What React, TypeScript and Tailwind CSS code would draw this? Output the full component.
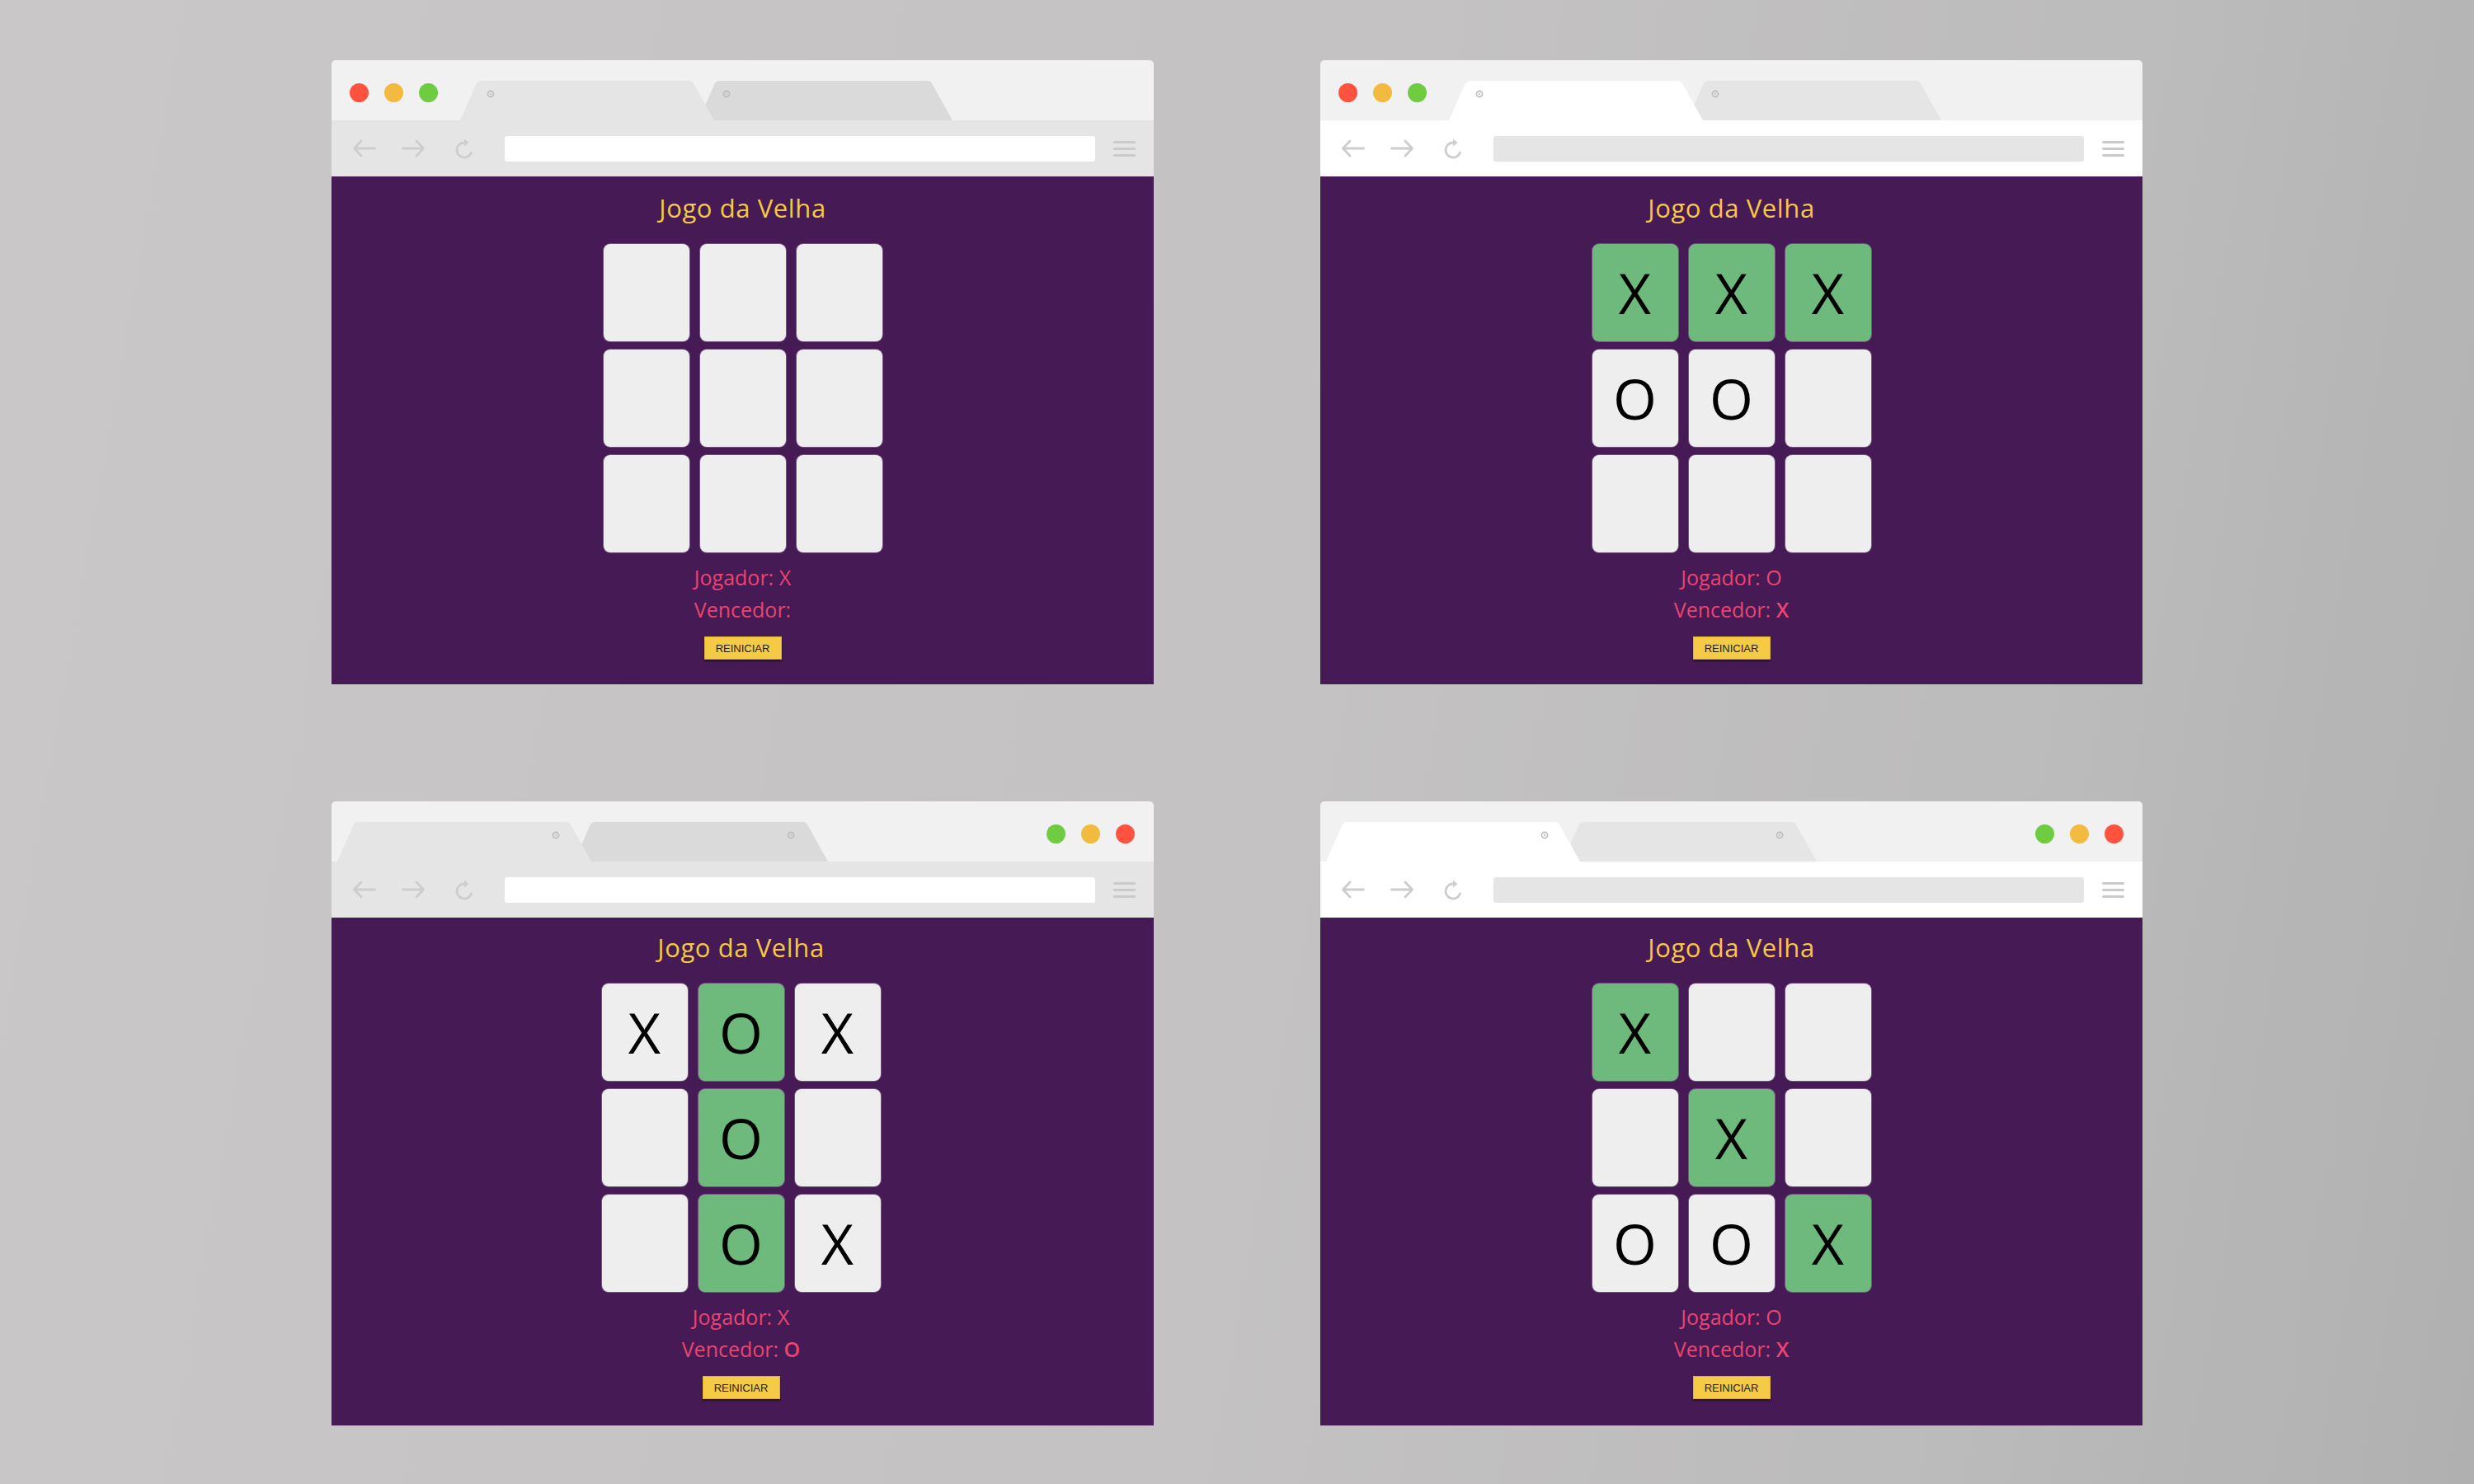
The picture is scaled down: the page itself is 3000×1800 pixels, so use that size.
type Mark = 'X' | 'O' | '';

type Game = {
  board: Mark[];
  win: number[];
  player: string;
  winner: string;
  flipped: boolean;
  active: boolean;
};

const games: Game[] = [
  { board: ['', '', '', '', '', '', '', '', ''], win: [], player: 'X', winner: '', flipped: false, active: false },
  { board: ['X', 'X', 'X', 'O', 'O', '', '', '', ''], win: [0, 1, 2], player: 'O', winner: 'X', flipped: false, active: true },
  { board: ['X', 'O', 'X', '', 'O', '', '', 'O', 'X'], win: [1, 4, 7], player: 'X', winner: 'O', flipped: true, active: false },
  { board: ['X', '', '', '', 'X', '', 'O', 'O', 'X'], win: [0, 4, 8], player: 'O', winner: 'X', flipped: true, active: true },
];

function Tab({ fill, closeX, className }: { fill: string; closeX: number; className?: string }) {
  return (
    <svg width="308" height="48" viewBox="0 0 308 48" className={className}>
      <path d="M0 48 L19 5 Q21 0 26 0 L277 0 Q282 0 284 5 L308 48 Z" fill={fill} />
      <circle cx={closeX} cy="16" r="3.6" fill="none" stroke="#bcbcbc" strokeWidth="1.6" />
      <path d={`M${closeX - 1.3} 14.7 L${closeX + 1.3} 17.3 M${closeX + 1.3} 14.7 L${closeX - 1.3} 17.3`} stroke="#c4c4c4" strokeWidth="1" />
    </svg>
  );
}

function Lights({ reverse }: { reverse: boolean }) {
  const colors = reverse ? ['#6fcb3f', '#f2ba3e', '#ff533f'] : ['#ff533f', '#f2ba3e', '#6fcb3f'];
  return (
    <div className={`flex gap-[19px] self-start mt-[28px] ${reverse ? 'ml-auto' : ''}`}>
      {colors.map((c) => (
        <div key={c} className="w-[23px] h-[23px] rounded-full" style={{ backgroundColor: c }} />
      ))}
    </div>
  );
}

function Toolbar({ active }: { active: boolean }) {
  const stroke = '#cdcdcd';
  return (
    <div className={`h-[68px] flex items-center pl-[25px] pr-[22px] ${active ? 'bg-white' : 'bg-[#e5e5e5]'}`}>
      <svg width="29" height="22" viewBox="0 0 29 22" fill="none">
        <path d="M27.5 11 H3 M11 2 L2.5 11 L11 20" stroke={stroke} strokeWidth="2.8" strokeLinecap="round" strokeLinejoin="round" />
      </svg>
      <svg width="29" height="22" viewBox="0 0 29 22" fill="none" className="ml-[31px]">
        <path d="M1.5 11 H26 M18 2 L26.5 11 L18 20" stroke={stroke} strokeWidth="2.8" strokeLinecap="round" strokeLinejoin="round" />
      </svg>
      <svg width="24" height="25" viewBox="0 0 24 25" fill="none" className="ml-[35px]">
        <path d="M12.5 5 A9 9 0 1 0 20.5 17" stroke={stroke} strokeWidth="2.8" strokeLinecap="round" />
        <path d="M12 0.5 L17.5 5 L12 9.5 Z" fill={stroke} />
      </svg>
      <div className={`ml-[37px] h-[31px] w-[716px] rounded-[3px] ${active ? 'bg-[#e5e5e5]' : 'bg-white'}`} />
      <div className="ml-auto flex flex-col gap-[5px]">
        <div className="w-[27px] h-[3px] rounded-full bg-[#cacaca]" />
        <div className="w-[27px] h-[3px] rounded-full bg-[#cacaca]" />
        <div className="w-[27px] h-[3px] rounded-full bg-[#cacaca]" />
      </div>
    </div>
  );
}

function TitleBar({ game }: { game: Game }) {
  const tab1 = game.active ? '#ffffff' : '#e5e5e5';
  const tab2 = game.active ? '#e5e5e5' : '#dadada';
  if (game.flipped) {
    return (
      <div className="h-[73px] bg-[#f1f1f1] rounded-t-[5px] flex items-end pl-[7px] pr-[23px]">
        <Tab fill={tab1} closeX={265} className="relative z-10" />
        <Tab fill={tab2} closeX={263} className="-ml-[21px]" />
        <Lights reverse />
      </div>
    );
  }
  return (
    <div className="h-[73px] bg-[#f1f1f1] rounded-t-[5px] flex items-end pl-[22px]">
      <Lights reverse={false} />
      <Tab fill={tab1} closeX={37} className="ml-[27px] relative z-10" />
      <Tab fill={tab2} closeX={34} className="-ml-[19px]" />
    </div>
  );
}

function Board({ game }: { game: Game }) {
  return (
    <div className="grid grid-cols-[104px_104px_104px] gap-x-[13px] gap-y-[10px]">
      {game.board.map((m, i) => (
        <div
          key={i}
          className={`h-[118px] rounded-[8px] flex items-center justify-center text-[68px] font-normal leading-none text-black shadow-[0_0_0_1px_rgba(255,255,255,0.25)] ${
            game.win.includes(i) ? 'bg-[#6eb97c]' : 'bg-[#eeeeee]'
          }`}
        >
          {m}
        </div>
      ))}
    </div>
  );
}

function Window({ game }: { game: Game }) {
  return (
    <div className="w-[997px] flex flex-col">
      <TitleBar game={game} />
      <Toolbar active={game.active} />
      <div
        className={`h-[616px] bg-[#461a55] flex flex-col items-center font-['Open_Sans',sans-serif] ${
          game.flipped ? 'pt-[16px]' : 'pt-[18px]'
        } ${game.flipped && !game.active ? 'pr-[4px]' : ''}`}
      >
        <h1 className="text-[31px] leading-[40px] font-medium text-[#f6c843] tracking-[0.6px]">Jogo da Velha</h1>
        <div className="mt-[24px]">
          <Board game={game} />
        </div>
        <div className="mt-[11px] text-[#e9456f] text-[25px] font-normal leading-[39px] text-center">
          <p>Jogador: {game.player}</p>
          <p>
            Vencedor: <span className="font-semibold">{game.winner}</span>
          </p>
        </div>
        <button className="mt-[13px] w-[94px] h-[28px] bg-[#f5cb45] border border-[#dfb236] shadow-[0_2px_2px_rgba(0,0,0,0.45)] font-['Liberation_Sans',Arial,sans-serif] text-[13px] text-[#1b1b1b] leading-none">
          REINICIAR
        </button>
      </div>
    </div>
  );
}

export default function App() {
  return (
    <div className="w-[3000px] h-[1800px] bg-[linear-gradient(100deg,#c9c7c8_0%,#c4c2c3_50%,#bdbcbc_78%,#b0b0b0_100%)] pt-[73px] pl-[402px]">
      <div className="grid grid-cols-[997px_997px] gap-x-[202px] gap-y-[142px]">
        {games.map((g, i) => (
          <Window key={i} game={g} />
        ))}
      </div>
    </div>
  );
}
